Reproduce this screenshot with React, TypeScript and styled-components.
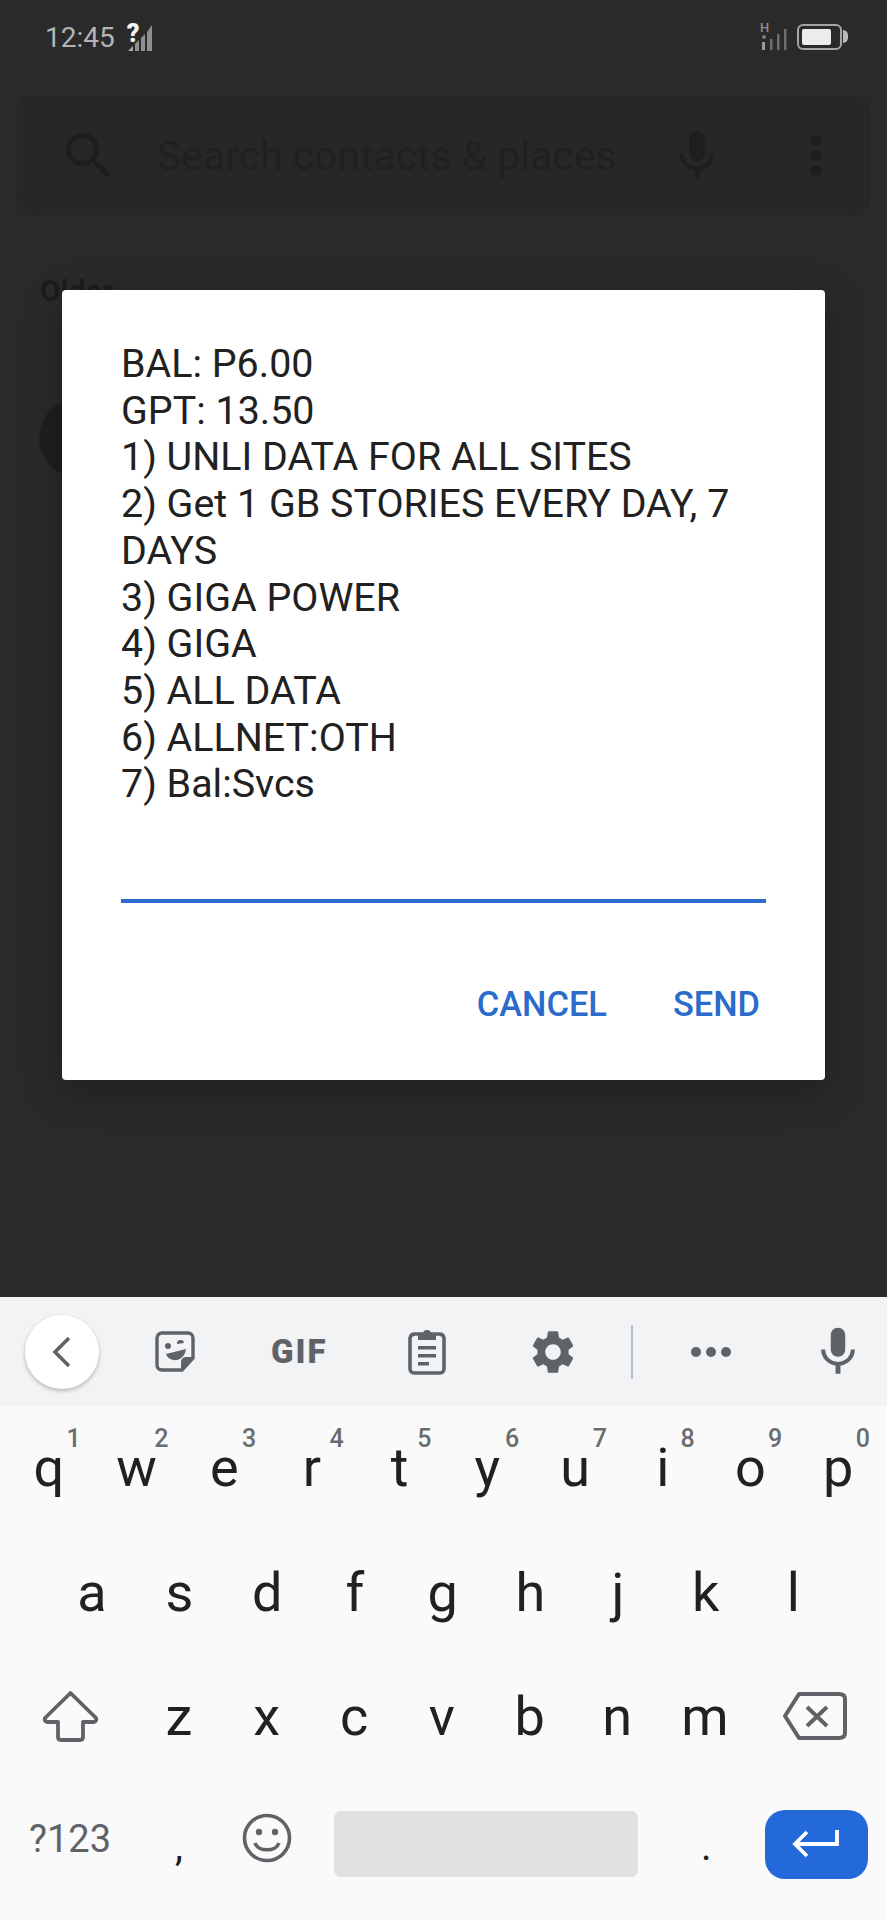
import React from "react";
import styled, { createGlobalStyle } from "styled-components";

const GlobalStyle = createGlobalStyle`
  html, body {
    margin: 0;
    padding: 0;
    background: #2a2a2a;
  }
  * {
    box-sizing: border-box;
  }
`;

const MIC_PATH =
  "M12 14c1.66 0 2.99-1.34 2.99-3L15 5c0-1.66-1.34-3-3-3S9 3.34 9 5v6c0 1.66 1.34 3 3 3zm5.3-3c0 3-2.54 5.1-5.3 5.1S6.7 14 6.7 11H5c0 3.41 2.72 6.23 6 6.72V21h2v-3.28c3.28-.48 6-3.3 6-6.72h-1.7z";
const SEARCH_PATH =
  "M15.5 14h-.79l-.28-.27C15.41 12.59 16 11.11 16 9.5 16 5.91 13.09 3 9.5 3S3 5.91 3 9.5 5.91 16 9.5 16c1.61 0 3.09-.59 4.23-1.57l.27.28v.79l5 4.99L20.49 19l-4.99-5zm-6 0C7.01 14 5 11.99 5 9.5S7.01 5 9.5 5 14 7.01 14 9.5 11.99 14 9.5 14z";
const GEAR_PATH =
  "M19.14 12.94c.04-.3.06-.61.06-.94 0-.32-.02-.64-.07-.94l2.03-1.58c.18-.14.23-.41.12-.61l-1.92-3.32c-.12-.22-.37-.29-.59-.22l-2.39.96c-.5-.38-1.03-.7-1.62-.94l-.36-2.54c-.04-.24-.24-.41-.48-.41h-3.84c-.24 0-.43.17-.47.41l-.36 2.54c-.59.24-1.13.57-1.62.94l-2.39-.96c-.22-.08-.47 0-.59.22L2.74 8.87c-.12.21-.08.47.12.61l2.03 1.58c-.05.3-.09.63-.09.94s.02.64.07.94l-2.03 1.58c-.18.14-.23.41-.12.61l1.92 3.32c.12.22.37.29.59.22l2.39-.96c.5.38 1.03.7 1.62.94l.36 2.54c.05.24.24.41.48.41h3.84c.24 0 .44-.17.47-.41l.36-2.54c.59-.24 1.13-.56 1.62-.94l2.39.96c.22.08.47 0 .59-.22l1.92-3.32c.12-.22.07-.47-.12-.61l-2.01-1.58zM12 15.6c-1.98 0-3.6-1.62-3.6-3.6s1.62-3.6 3.6-3.6 3.6 1.62 3.6 3.6-1.62 3.6-3.6 3.6z";

const dialogLines = [
  "BAL: P6.00",
  "GPT: 13.50",
  "1) UNLI DATA FOR ALL SITES",
  "2) Get 1 GB STORIES EVERY DAY, 7 DAYS",
  "3) GIGA POWER",
  "4) GIGA",
  "5) ALL DATA",
  "6) ALLNET:OTH",
  "7) Bal:Svcs",
];

const topRow = [
  ["q", "1"],
  ["w", "2"],
  ["e", "3"],
  ["r", "4"],
  ["t", "5"],
  ["y", "6"],
  ["u", "7"],
  ["i", "8"],
  ["o", "9"],
  ["p", "0"],
];

const App: React.FC = () => {
  return (
    <Phone>
      <GlobalStyle />
      <Screen>
        <StatusBar>
          <StatusLeft>
            <Clock>12:45</Clock>
            <SimSignal>
              <Unknown>?</Unknown>
              <svg width="26" height="28" viewBox="0 0 26 28">
                <path d="M1 27 L6 22 V27 Z" fill="#a8a8a8" />
                <path d="M8 20 L12 16 V27 H8 Z" fill="#8f8f8f" />
                <path d="M14 14 L18 10 V27 H14 Z" fill="#8f8f8f" />
                <path d="M20 8 L25 1 V27 H20 Z" fill="#8f8f8f" />
              </svg>
            </SimSignal>
          </StatusLeft>
          <StatusRight>
            <NetworkSignal>
              <NetworkType>H</NetworkType>
              <svg width="28" height="29" viewBox="0 0 28 29">
                <circle cx="4" cy="15" r="2" fill="#7d7d7d" />
                <path d="M2 20h3v8H2z" fill="#9a9a9a" />
                <path d="M10 17h2.5v11H10z M17 12h2.5v16H17z M24 7h2.5v21H24z" fill="#6e6e6e" />
              </svg>
            </NetworkSignal>
            <Battery>
              <BatteryFill />
            </Battery>
            <BatteryCap />
          </StatusRight>
        </StatusBar>

        <SearchBar>
          <SearchIcon viewBox="0 0 24 24">
            <path d={SEARCH_PATH} />
          </SearchIcon>
          <SearchText>Search contacts &amp; places</SearchText>
          <SearchMic viewBox="0 0 24 24">
            <path d={MIC_PATH} />
          </SearchMic>
          <SearchDots>
            <i />
            <i />
            <i />
          </SearchDots>
        </SearchBar>

        <SectionLabel>Older</SectionLabel>
        <ContactRow>
          <Avatar />
        </ContactRow>

        <Dialog>
          <Message>
            {dialogLines.map((line) => (
              <div key={line}>{line}</div>
            ))}
          </Message>
          <Answer />
          <Actions>
            <ActionButton>CANCEL</ActionButton>
            <ActionButton>SEND</ActionButton>
          </Actions>
        </Dialog>
      </Screen>

      <Keyboard>
        <Toolbar>
          <BackButton>
            <svg width="22" height="32" viewBox="0 0 22 32">
              <path d="M18 2 L4 16 L18 30" fill="none" stroke="#5f6368" strokeWidth="3.6" />
            </svg>
          </BackButton>
          <ToolSlot $gap={56}>
            <svg width="40" height="41" viewBox="0 0 40 41">
              <path
                d="M7 2h26a5 5 0 0 1 5 5v20L27 39H7a5 5 0 0 1-5-5V7a5 5 0 0 1 5-5z"
                fill="none"
                stroke="#5f6368"
                strokeWidth="3.4"
              />
              <path d="M38 26h-7a5 5 0 0 0-5 5v8z" fill="#5f6368" />
              <circle cx="13" cy="15" r="3" fill="#5f6368" />
              <path d="M22 13a3.5 3.5 0 0 1 7-1z" fill="#5f6368" />
              <path d="M11 23 L31 18 C30 26 24 30 18 29 C14 28 12 26 11 23z" fill="#5f6368" />
            </svg>
          </ToolSlot>
          <ToolSlot $gap={76}>
            <GifLabel>GIF</GifLabel>
          </ToolSlot>
          <ToolSlot $gap={78}>
            <svg width="40" height="47" viewBox="0 0 40 47">
              <path
                d="M8 6h24a5 5 0 0 1 5 4v31a4 4 0 0 1-4 4H7a4 4 0 0 1-4-4V10a5 5 0 0 1 5-4z"
                fill="none"
                stroke="#5f6368"
                strokeWidth="3.6"
              />
              <path d="M11 6h5a4 4 0 0 1 8 0h5v6H11z" fill="#5f6368" />
              <path d="M11 18h18v3.4H11zM11 26h18v3.4H11zM11 34h11v3.4H11z" fill="#5f6368" />
            </svg>
          </ToolSlot>
          <ToolSlot $gap={80}>
            <GearIcon viewBox="0 0 24 24">
              <path d={GEAR_PATH} />
            </GearIcon>
          </ToolSlot>
          <ToolDivider />
          <ToolSlot $gap={57}>
            <svg width="42" height="12" viewBox="0 0 42 12">
              <circle cx="6" cy="6" r="5" fill="#5f6368" />
              <circle cx="21" cy="6" r="5" fill="#5f6368" />
              <circle cx="36" cy="6" r="5" fill="#5f6368" />
            </svg>
          </ToolSlot>
          <ToolSlot $gap={77}>
            <KeyMicIcon viewBox="0 0 24 24">
              <path d={MIC_PATH} />
            </KeyMicIcon>
          </ToolSlot>
        </Toolbar>

        <Keys>
          <TopRow>
            {topRow.map(([letter, hint]) => (
              <TopKey key={letter}>
                {letter}
                <Hint>{hint}</Hint>
              </TopKey>
            ))}
          </TopRow>
          <HomeRow>
            {"asdfghjkl".split("").map((letter) => (
              <HomeKey key={letter}>{letter}</HomeKey>
            ))}
          </HomeRow>
          <ShiftRow>
            <IconKey>
              <svg width="57" height="52" viewBox="0 0 57 52">
                <path
                  d="M28.5 3 L54 28 Q55 31 52 32 H41 V47 Q41 50 38 50 H19 Q16 50 16 47 V32 H5 Q2 31 3 28 Z"
                  fill="none"
                  stroke="#5f6368"
                  strokeWidth="3.8"
                  strokeLinejoin="round"
                />
              </svg>
            </IconKey>
            {"zxcvbnm".split("").map((letter) => (
              <LetterKey key={letter}>{letter}</LetterKey>
            ))}
            <IconKey>
              <svg width="64" height="50" viewBox="0 0 64 50">
                <path
                  d="M16 3 H56 Q62 3 62 8 V42 Q62 47 56 47 H16 L2 25 Z"
                  fill="none"
                  stroke="#5f6368"
                  strokeWidth="4"
                  strokeLinejoin="round"
                />
                <path d="M24 16 L44 35 M44 16 L24 35" stroke="#5f6368" strokeWidth="4" fill="none" />
              </svg>
            </IconKey>
          </ShiftRow>
          <BottomRow>
            <SymbolKey>?123</SymbolKey>
            <PunctKey>,</PunctKey>
            <IconKey>
              <svg width="50" height="50" viewBox="0 0 50 50">
                <circle cx="25" cy="25" r="22.5" fill="none" stroke="#5f6368" strokeWidth="3.6" />
                <circle cx="17" cy="19" r="3.2" fill="#5f6368" />
                <circle cx="33" cy="19" r="3.2" fill="#5f6368" />
                <path d="M13 30 C16 39 34 39 37 30" fill="none" stroke="#5f6368" strokeWidth="3.6" />
              </svg>
            </IconKey>
            <SpaceCell>
              <SpaceBar />
            </SpaceCell>
            <PunctKey>.</PunctKey>
            <IconKey>
              <EnterButton>
                <svg width="48" height="30" viewBox="0 0 48 30">
                  <path
                    d="M45 1 V15 H4 M15 3 L3 15 L15 27"
                    fill="none"
                    stroke="#ffffff"
                    strokeWidth="3.8"
                  />
                </svg>
              </EnterButton>
            </IconKey>
          </BottomRow>
        </Keys>
      </Keyboard>
    </Phone>
  );
};

const Phone = styled.div`
  width: 887px;
  height: 1920px;
  display: flex;
  flex-direction: column;
  overflow: hidden;
  font-family: Roboto, "Liberation Sans", sans-serif;
`;

const Screen = styled.div`
  position: relative;
  height: 1297px;
  background: #2a2a2a;
  overflow: hidden;
`;

const StatusBar = styled.div`
  height: 62px;
  padding: 22px 39px 0 45px;
  display: flex;
  justify-content: space-between;
  align-items: flex-start;
`;

const StatusLeft = styled.div`
  display: flex;
  align-items: flex-start;
  gap: 12px;
`;

const Clock = styled.div`
  font-size: 28px;
  line-height: 32px;
  color: #b4b4b4;
`;

const SimSignal = styled.div`
  position: relative;
  margin-top: 2px;
  height: 28px;
  display: flex;
`;

const Unknown = styled.span`
  position: absolute;
  left: 0;
  top: -4px;
  font-size: 25px;
  line-height: 28px;
  font-weight: 900;
  color: #f4f4f4;
`;

const StatusRight = styled.div`
  display: flex;
  align-items: center;
  height: 29px;
`;

const NetworkSignal = styled.div`
  position: relative;
  height: 29px;
`;

const NetworkType = styled.span`
  position: absolute;
  left: 0;
  top: 0;
  font-size: 13px;
  line-height: 12px;
  font-weight: 500;
  color: #8e8e8e;
`;

const Battery = styled.div`
  width: 45px;
  height: 26px;
  margin-left: 9px;
  padding: 3px 9px 3px 3px;
  border: 2px solid #a5a5a5;
  border-radius: 6px;
`;

const BatteryFill = styled.div`
  height: 100%;
  background: #ececec;
  border-radius: 2px;
`;

const BatteryCap = styled.div`
  width: 5px;
  height: 13px;
  margin-left: 1px;
  background: #b9b9b9;
  border-radius: 0 5px 5px 0;
`;

const SearchBar = styled.div`
  margin: 34px 17px 0;
  height: 119px;
  padding: 0 47px 0 40px;
  display: flex;
  align-items: center;
  background: #272727;
  border: 1px solid #252525;
  border-radius: 16px;
`;

const SearchIcon = styled.svg`
  width: 62px;
  height: 62px;
  fill: #1e1e1e;
  flex: none;
`;

const SearchText = styled.div`
  margin-left: 37px;
  flex: 1;
  font-size: 40.9px;
  line-height: 46px;
  color: #202020;
  white-space: nowrap;
`;

const SearchMic = styled.svg`
  width: 60px;
  height: 60px;
  margin-right: 83px;
  fill: #1e1e1e;
  flex: none;
`;

const SearchDots = styled.div`
  width: 12px;
  flex: none;
  display: flex;
  flex-direction: column;
  gap: 4px;

  i {
    display: block;
    width: 12px;
    height: 11px;
    border-radius: 50%;
    background: #1e1e1e;
  }
`;

const SectionLabel = styled.div`
  margin: 58px 0 0 40px;
  font-size: 30px;
  line-height: 36px;
  font-weight: 700;
  color: #1c1c1c;
`;

const ContactRow = styled.div`
  margin: 89px 0 0 39px;
`;

const Avatar = styled.div`
  width: 80px;
  height: 80px;
  border-radius: 50%;
  background: #1f1f1f;
`;

const Dialog = styled.div`
  position: absolute;
  left: 62px;
  top: 290px;
  width: 763px;
  height: 790px;
  padding: 51px 59px 0;
  display: flex;
  flex-direction: column;
  background: #ffffff;
  border-radius: 4px;
  box-shadow: 0 10px 40px rgba(0, 0, 0, 0.28);
`;

const Message = styled.div`
  height: 467px;
  font-size: 39.4px;
  line-height: 46.7px;
  color: #212121;
`;

const Answer = styled.div`
  height: 4px;
  margin: 91px 0 0;
  background: #2a6bcc;
`;

const Actions = styled.div`
  margin-top: 82px;
  padding-right: 6px;
  display: flex;
  justify-content: flex-end;
  gap: 66px;
`;

const ActionButton = styled.div`
  font-size: 34.4px;
  line-height: 38px;
  font-weight: 500;
  color: #2a6bcc;
`;

const Keyboard = styled.div`
  flex: 1;
  display: flex;
  flex-direction: column;
  background: #fafafa;
`;

const Toolbar = styled.div`
  height: 109px;
  padding-left: 25px;
  display: flex;
  align-items: center;
  background: #f1f3f4;
`;

const BackButton = styled.div`
  width: 74px;
  height: 74px;
  flex: none;
  display: flex;
  align-items: center;
  justify-content: center;
  background: #ffffff;
  border-radius: 50%;
  box-shadow: 0 2px 4px rgba(0, 0, 0, 0.25);
`;

const ToolSlot = styled.div<{ $gap: number }>`
  margin-left: ${(p) => p.$gap}px;
  flex: none;
  display: flex;
  align-items: center;
`;

const GifLabel = styled.div`
  width: 58px;
  font-size: 33px;
  line-height: 38px;
  font-weight: 900;
  letter-spacing: 2px;
  color: #5f6368;
`;

const GearIcon = styled.svg`
  width: 52px;
  height: 52px;
  fill: #5f6368;
`;

const ToolDivider = styled.div`
  width: 2px;
  height: 54px;
  margin-left: 52px;
  flex: none;
  background: #b4bccb;
`;

const KeyMicIcon = styled.svg`
  width: 58px;
  height: 58px;
  fill: #5f6368;
`;

const Keys = styled.div`
  flex: 1;
  padding: 5px 5px 21px;
  display: grid;
  grid-auto-rows: 122px;
`;

const TopRow = styled.div`
  display: grid;
  grid-template-columns: repeat(10, 1fr);
`;

const HomeRow = styled.div`
  display: grid;
  grid-template-columns: repeat(9, 87.7px);
  padding-left: 43px;
`;

const ShiftRow = styled.div`
  display: grid;
  grid-template-columns: 130px repeat(7, 87.7px) 1fr;
`;

const BottomRow = styled.div`
  display: grid;
  grid-template-columns: 130px 87.7px 87.7px 352px 87.7px 1fr;
`;

const LetterKey = styled.div`
  position: relative;
  display: flex;
  align-items: center;
  justify-content: center;
  font-size: 54px;
  color: #202124;
`;

const TopKey = styled(LetterKey)`
  padding-bottom: 10px;
`;

const HomeKey = styled(LetterKey)`
  padding-bottom: 4px;
`;

const Hint = styled.span`
  position: absolute;
  right: 12px;
  top: 16px;
  font-size: 25px;
  line-height: 24px;
  font-weight: 500;
  color: #6a6d70;
`;

const IconKey = styled.div`
  display: flex;
  align-items: center;
  justify-content: center;
`;

const SymbolKey = styled(IconKey)`
  font-size: 38px;
  padding-top: 2px;
  color: #5f6368;
`;

const PunctKey = styled(IconKey)`
  font-size: 40px;
  color: #202124;
  padding-top: 16px;
`;

const SpaceCell = styled(IconKey)`
  padding: 0 24px;
`;

const SpaceBar = styled.div`
  width: 100%;
  height: 66px;
  margin-top: 12px;
  background: #dfe1e3;
  border-radius: 7px;
`;

const EnterButton = styled.div`
  width: 103px;
  height: 69px;
  margin-top: 12px;
  display: flex;
  align-items: center;
  justify-content: center;
  background: #2369d9;
  border-radius: 20px;
`;

export default App;
